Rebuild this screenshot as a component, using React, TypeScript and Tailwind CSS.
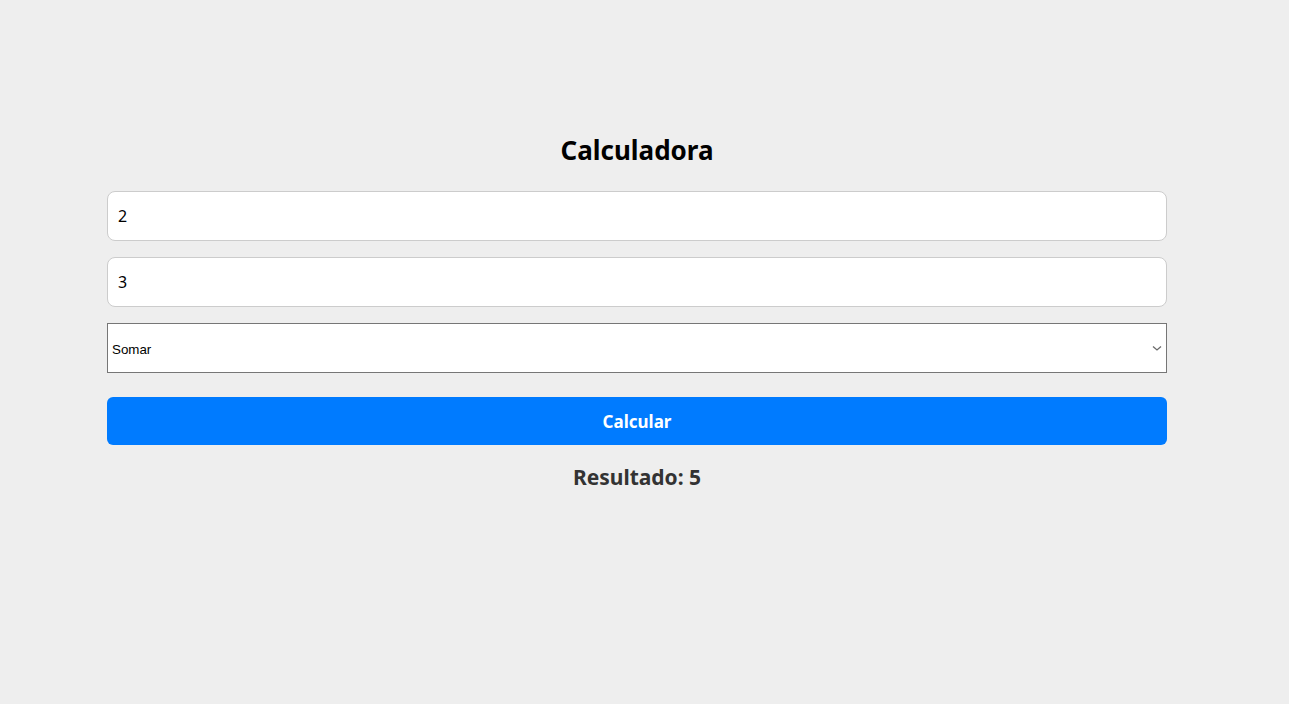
import { useState } from 'react'

export default function App() {
  const [a, setA] = useState('2')
  const [b, setB] = useState('3')
  const [op, setOp] = useState('somar')
  const [result, setResult] = useState<number | null>(5)

  const calcular = () => {
    const x = parseFloat(a)
    const y = parseFloat(b)
    if (op === 'somar') setResult(x + y)
    else if (op === 'subtrair') setResult(x - y)
    else if (op === 'multiplicar') setResult(x * y)
    else setResult(x / y)
  }

  return (
    <div className="min-h-[704px] w-full bg-[#eeeeee] font-['Noto_Sans',sans-serif]">
      <div className="ml-[107px] w-[1060px] pt-[131px]">
        <h1 className="text-center text-[26px] font-bold leading-[38px] text-black">Calculadora</h1>
        <div className="mt-[22px] flex flex-col gap-[16px]">
          <input
            type="number"
            value={a}
            onChange={e => setA(e.target.value)}
            className="h-[50px] w-full rounded-[8px] border border-[#cccccc] bg-white px-[10px] text-[16px] text-black outline-none"
          />
          <input
            type="number"
            value={b}
            onChange={e => setB(e.target.value)}
            className="h-[50px] w-full rounded-[8px] border border-[#cccccc] bg-white px-[10px] text-[16px] text-black outline-none"
          />
          <div className="relative">
            <select
              value={op}
              onChange={e => setOp(e.target.value)}
              className="h-[50px] w-full appearance-none border border-[#767676] bg-white pl-[4px] pt-[3px] font-['Liberation_Sans',Arial,sans-serif] text-[13.33px] text-black outline-none"
            >
              <option value="somar">Somar</option>
              <option value="subtrair">Subtrair</option>
              <option value="multiplicar">Multiplicar</option>
              <option value="dividir">Dividir</option>
            </select>
            {/* thin chevron like the native one */}
            <svg
              className="pointer-events-none absolute right-[5px] top-[21px]"
              width="10"
              height="8"
              viewBox="0 0 10 8"
              fill="none"
            >
              <path d="M1 2.5 L5 6 L9 2.5" stroke="#6b6b6b" strokeWidth="1.3" />
            </svg>
          </div>
        </div>
        <button
          onClick={calcular}
          className="mt-[24px] h-[48px] w-full rounded-[6px] bg-[#007bff] pt-[2px] text-[17px] font-bold text-white"
        >
          Calcular
        </button>
        <p className="mt-[16px] text-center text-[21px] font-bold leading-[32px] text-[#333333]">
          Resultado: {result}
        </p>
      </div>
    </div>
  )
}
